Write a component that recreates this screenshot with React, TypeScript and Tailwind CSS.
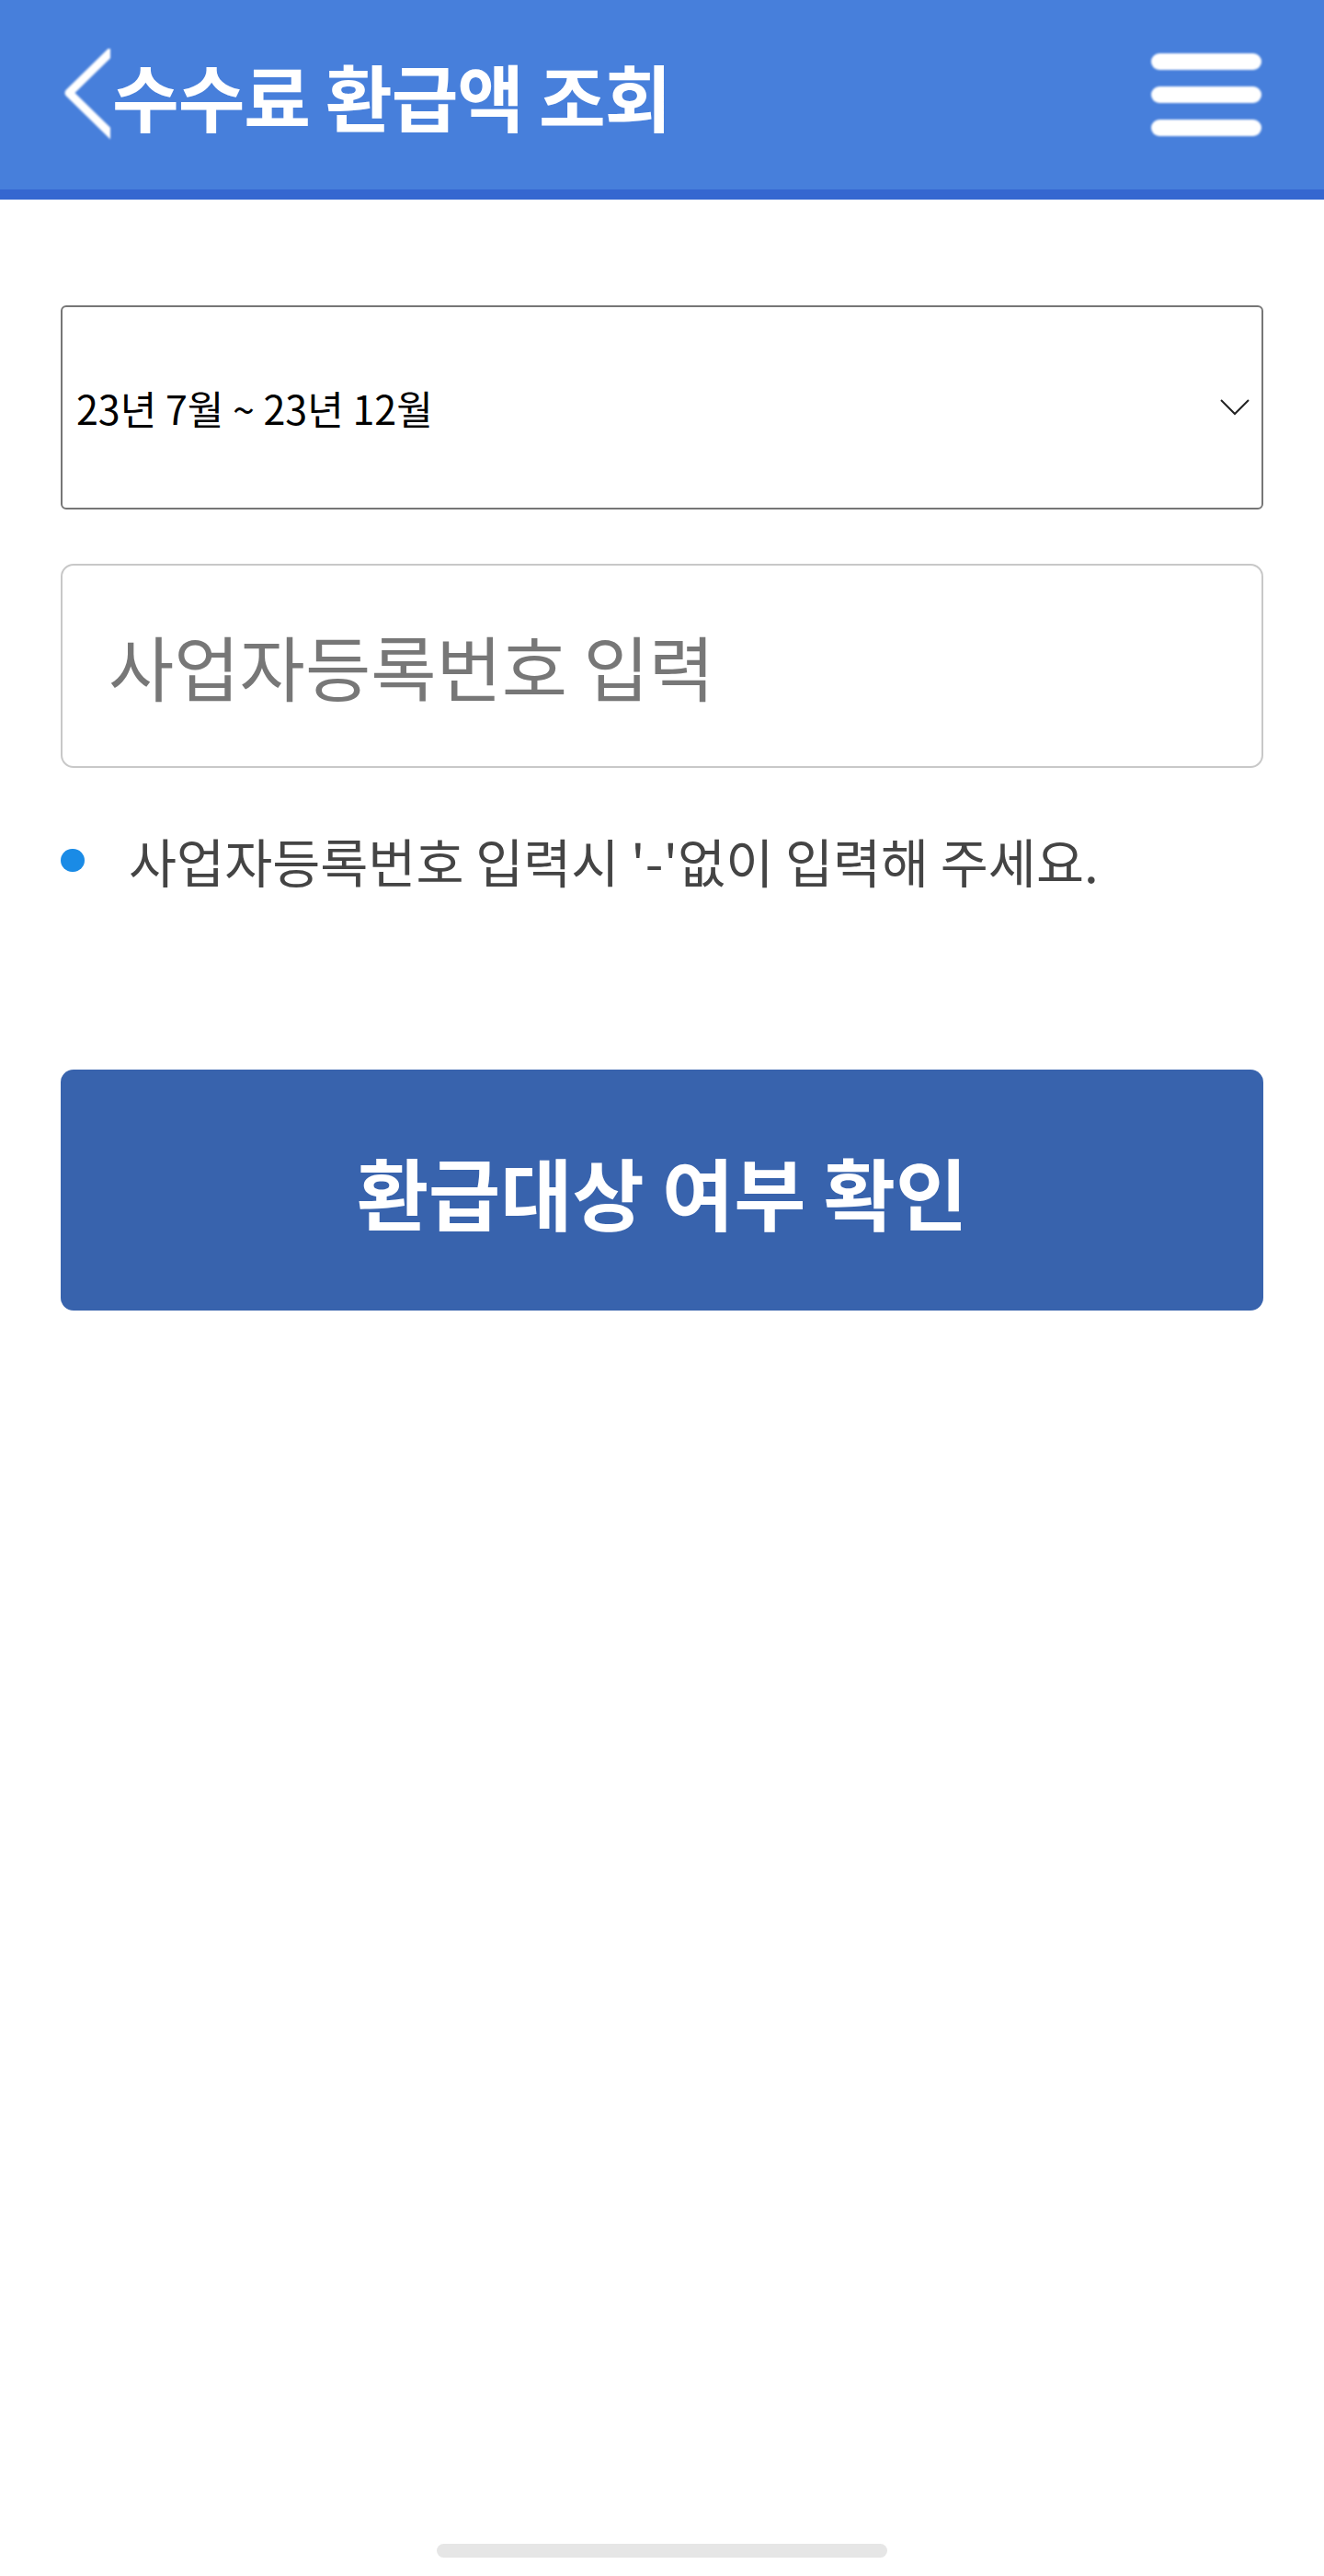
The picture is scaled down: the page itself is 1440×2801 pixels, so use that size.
import React from "react";

function BackChevron() {
  return (
    <svg width="54" height="100" viewBox="0 0 54 100" className="shrink-0 blur-[0.8px] overflow-hidden">
      <polyline
        points="62,-4 9,48 62,100"
        fill="none"
        stroke="#ffffff"
        strokeWidth="9"
        strokeLinecap="butt"
        strokeLinejoin="round"
      />
    </svg>
  );
}

function MenuIcon() {
  return (
    <div className="flex flex-col gap-[18px] w-[120px] blur-[1px]">
      <span className="block h-[18px] w-full rounded-[9px] bg-white" />
      <span className="block h-[18px] w-full rounded-[9px] bg-white" />
      <span className="block h-[18px] w-full rounded-[9px] bg-white" />
    </div>
  );
}

function SelectChevron() {
  return (
    <svg width="32" height="18" viewBox="0 0 32 18">
      <polyline points="1,1 16,16 31,1" fill="none" stroke="#222222" strokeWidth="2" />
    </svg>
  );
}

export default function App() {
  return (
    <div className="min-h-[2801px] bg-white flex flex-col font-['Noto_Sans_CJK_KR','Noto_Sans',sans-serif]">
      {/* Top app bar */}
      <header className="h-[217px] bg-[#477fdb] border-b-[11px] border-[#3567d0] flex items-center justify-between pl-[66px] pr-[68px]">
        <div className="flex items-center">
          <BackChevron />
          <h1 className="ml-[2px] text-[79px] font-bold leading-none text-white tracking-[-1px]">
            수수료 환급액 조회
          </h1>
        </div>
        <MenuIcon />
      </header>

      <main className="px-[66px] pt-[115px] flex flex-col">
        {/* Period selector */}
        <div className="h-[222px] border-2 border-[#767676] rounded-[6px] flex items-center justify-between pl-[15px] pr-[13px]">
          <span className="text-[43px] leading-none text-black">23년 7월 ~ 23년 12월</span>
          <SelectChevron />
        </div>

        {/* Business registration number field */}
        <div className="mt-[59px] h-[222px] border-2 border-[#c8c8c8] rounded-[14px] flex items-center pl-[50px]">
          <span className="text-[77.5px] leading-none text-[#777777]">사업자등록번호 입력</span>
        </div>

        {/* Helper note */}
        <div className="mt-[70px] h-[60px] flex items-center">
          <span className="block w-[26px] h-[25px] rounded-full bg-[#1a8be6] blur-[0.5px] mr-[48px] shrink-0" />
          <span className="text-[56.6px] leading-none text-[#444444]">
            사업자등록번호 입력시 '-'없이 입력해 주세요.
          </span>
        </div>

        {/* Submit */}
        <button className="mt-[198px] h-[262px] w-full rounded-[14px] bg-[#3863ad] flex items-center justify-center">
          <span className="text-[85px] font-bold leading-none text-white">환급대상 여부 확인</span>
        </button>
      </main>

      {/* Home indicator */}
      <div className="mt-auto mb-[20px] mx-auto w-[490px] h-[15px] rounded-full bg-[#e6e6e6]" />
    </div>
  );
}
